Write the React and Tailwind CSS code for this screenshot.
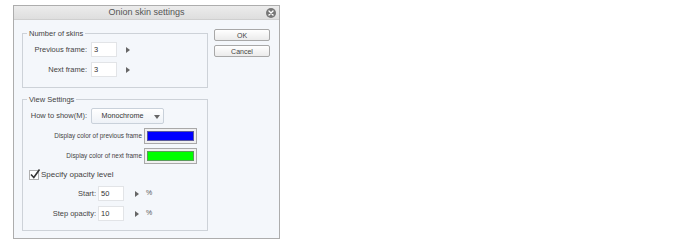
import React from "react";

const font = { fontFamily: '"Liberation Sans", Arial, sans-serif' };

function Arrow() {
  return (
    <svg width="4" height="6" viewBox="0 0 4 6" className="shrink-0">
      <path d="M0 0 L4 3 L0 6 Z" fill="#666" />
    </svg>
  );
}

function NumInput({ value }) {
  return (
    <div className="w-[26px] h-[15px] bg-white border border-[#e2e4e7] flex items-center pl-[2px] text-[7.5px] text-[#333]">
      {value}
    </div>
  );
}

function Group({ title, className, children }) {
  return (
    <div className={"relative border border-[#cdd2d8] " + className}>
      <div className="absolute left-[4px] top-[-6px] px-[2px] bg-[#f4f7fb] text-[7.5px] leading-[11px] text-[#444]">
        {title}
      </div>
      {children}
    </div>
  );
}

const label = "text-right text-[7.5px] text-[#444]";

export default function App() {
  return (
    <div className="w-[695px] h-[244px] bg-white pl-[13px] pt-[5px]" style={font}>
      <div className="w-[267px] h-[234px] border border-[#adadad] flex flex-col bg-[#f4f7fb]">
        <div className="relative h-[14px] bg-gradient-to-b from-[#ececec] to-[#dedede] border-b border-[#cfcfcf] flex items-center justify-center">
          <span className="text-[9px] text-[#555] leading-none">Onion skin settings</span>
          <div className="absolute right-[3px] top-[2px] w-[10px] h-[10px] rounded-full bg-[#777] flex items-center justify-center">
            <svg width="6" height="6" viewBox="0 0 6 6">
              <path d="M1 1 L5 5 M5 1 L1 5" stroke="white" strokeWidth="1.4" strokeLinecap="round" />
            </svg>
          </div>
        </div>
        <div className="flex-1 flex items-start pl-[8px]">
          <div className="pt-[13px] flex flex-col">
            <Group title="Number of skins" className="w-[186px] h-[55px] pt-[8px]">
              <div className="flex items-center h-[15px]">
                <div className={"w-[65px] pr-[1px] " + label}>Previous frame:</div>
                <div className="ml-[3px]"><NumInput value="3" /></div>
                <div className="ml-[9px]"><Arrow /></div>
              </div>
              <div className="flex items-center h-[15px] mt-[5px]">
                <div className={"w-[65px] pr-[1px] " + label}>Next frame:</div>
                <div className="ml-[3px]"><NumInput value="3" /></div>
                <div className="ml-[9px]"><Arrow /></div>
              </div>
            </Group>
            <Group title="View Settings" className="w-[186px] h-[132px] mt-[11px] pt-[8px]">
              <div className="flex items-center h-[16px]">
                <div className={"w-[65px] pr-[1px] " + label}>How to show(M):</div>
                <div className="ml-[3px] w-[73px] h-[16px] rounded-[2px] border border-[#c9d1da] bg-gradient-to-b from-white to-[#eef2f7] flex items-center relative">
                  <span className="w-full text-center text-[7.2px] text-[#333] pr-[10px]">Monochrome</span>
                  <svg width="6" height="4" viewBox="0 0 6 4" className="absolute right-[3px] top-[6px]">
                    <path d="M0 0 L6 0 L3 4 Z" fill="#666" />
                  </svg>
                </div>
              </div>
              <div className="flex items-center h-[16px] mt-[4px]">
                <div className="w-[119px] text-right text-[6.4px] text-[#444]">Display color of previous frame</div>
                <div className="ml-[2px] w-[53px] h-[16px] border border-[#a9a9a9] bg-[#f0f0f0] p-[2px]">
                  <div className="w-full h-full bg-[#0000ff] border border-[#5a5a9a]" />
                </div>
              </div>
              <div className="flex items-center h-[16px] mt-[4px]">
                <div className="w-[119px] text-right text-[6.4px] text-[#444]">Display color of next frame</div>
                <div className="ml-[2px] w-[53px] h-[16px] border border-[#a9a9a9] bg-[#f0f0f0] p-[2px]">
                  <div className="w-full h-full bg-[#00ff00] border border-[#5a9a5a]" />
                </div>
              </div>
              <div className="flex items-center h-[10px] mt-[6px] pl-[6px]">
                <div className="relative w-[10px] h-[10px] border border-[#b0b0b0] bg-white">
                  <svg width="12" height="12" viewBox="0 0 12 12" className="absolute left-[-1px] top-[-3px]">
                    <path d="M2 6.5 L4.8 9.5 L10.5 1.5" stroke="#333" strokeWidth="1.6" fill="none" />
                  </svg>
                </div>
                <span className="ml-[2px] text-[8px] text-[#444]">Specify opacity level</span>
              </div>
              <div className="flex items-center h-[15px] mt-[6px]">
                <div className={"w-[73px] " + label}>Start:</div>
                <div className="ml-[2px]"><NumInput value="50" /></div>
                <div className="ml-[11px]"><Arrow /></div>
                <span className="ml-[7px] text-[7px] text-[#555]">%</span>
              </div>
              <div className="flex items-center h-[15px] mt-[5px]">
                <div className={"w-[73px] " + label}>Step opacity:</div>
                <div className="ml-[2px]"><NumInput value="10" /></div>
                <div className="ml-[11px]"><Arrow /></div>
                <span className="ml-[7px] text-[7px] text-[#555]">%</span>
              </div>
            </Group>
          </div>
          <div className="ml-[6px] pt-[9px] flex flex-col gap-[4px]">
            <button className="w-[56px] h-[12px] border border-[#a8a8a8] rounded-[2px] bg-gradient-to-b from-white to-[#ebebeb] text-[7px] text-[#444] leading-none flex items-center justify-center">
              OK
            </button>
            <button className="w-[56px] h-[12px] border border-[#a8a8a8] rounded-[2px] bg-gradient-to-b from-white to-[#ebebeb] text-[7px] text-[#444] leading-none flex items-center justify-center">
              Cancel
            </button>
          </div>
        </div>
      </div>
    </div>
  );
}
